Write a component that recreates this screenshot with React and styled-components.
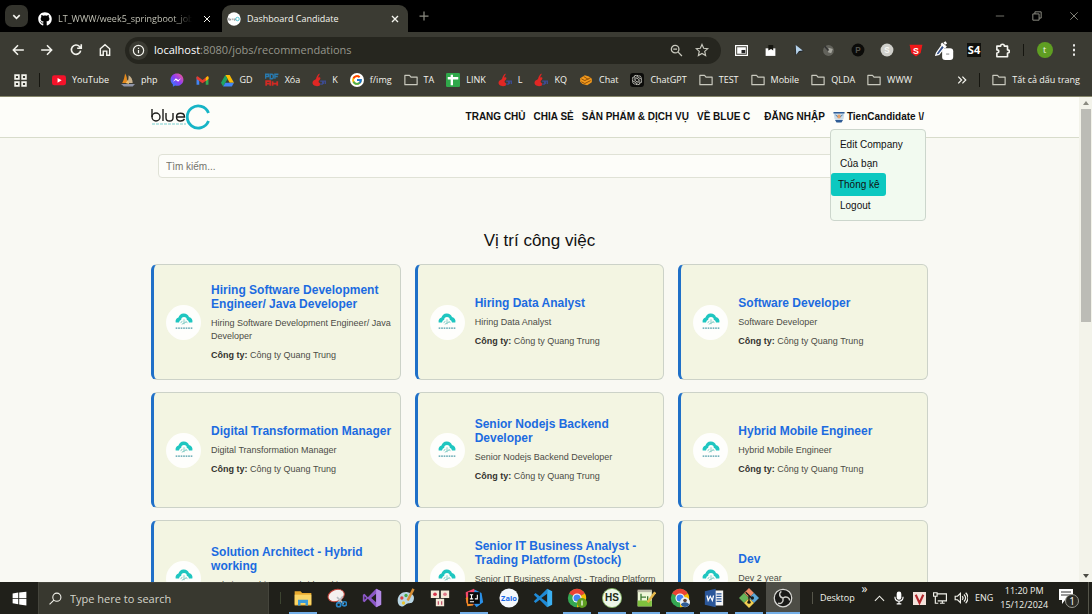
import React from "react";
import styled, { createGlobalStyle, css } from "styled-components";
import { FaGithub } from "react-icons/fa";
import { FcGoogle } from "react-icons/fc";
import { SiOpenai } from "react-icons/si";

const Global = createGlobalStyle`
  * { box-sizing: border-box; }
  html, body { margin: 0; background: #f9f9f3; }
  button, input { font: inherit; color: inherit; }
  button { border: 0; padding: 0; background: none; cursor: pointer; }
  a { color: inherit; text-decoration: none; }
  h1, h2, p, ul { margin: 0; padding: 0; }
  ul { list-style: none; }
  svg { display: block; flex: none; }
`;

const uiFont = `"Open Sans", "Noto Sans", sans-serif`;
const pageFont = `"Liberation Sans", Arial, sans-serif`;

const Screen = styled.div`
  display: flex;
  flex-direction: column;
  height: 100vh;
  overflow: hidden;
`;

/* ---------- browser chrome ---------- */

const Chrome = styled.header`
  flex: none;
  background: #3b3b33;
  color: #f4f4ee;
  font: 500 9px/14px ${uiFont};
  border-bottom: 1px solid #86866a;
`;

const TabStrip = styled.div`
  display: flex;
  align-items: flex-end;
  height: 32px;
  background: #000;
`;

const IconButton = styled.button`
  display: flex;
  flex: none;
  align-items: center;
  justify-content: center;
  width: ${(p) => p.$w || 29}px;
  height: ${(p) => p.$h || 28}px;
  color: ${(p) => p.$color || "#f4f4ee"};
`;

const TabSearch = styled(IconButton)`
  margin: 0 5px;
  align-self: center;
  border-radius: 7px;
  background: #34342d;
`;

const Tab = styled.div`
  display: flex;
  align-items: center;
  gap: 6px;
  width: ${(p) => p.$w}px;
  height: 27px;
  padding: 0 6px 0 5px;
  border-radius: 9px 9px 0 0;
  color: ${(p) => (p.$active ? "#f4f4ee" : "#c0c0b4")};
  background: ${(p) => (p.$active ? "#3b3b33" : "none")};
`;

const TabTitle = styled.span`
  flex: 1;
  overflow: hidden;
  white-space: nowrap;
  ${(p) =>
    p.$fade &&
    css`
      mask-image: linear-gradient(90deg, #000 86%, transparent);
    `}
`;

const WindowControls = styled.div`
  display: flex;
  margin-left: auto;
`;

const Toolbar = styled.div`
  display: flex;
  align-items: center;
  height: 36px;
  padding: 0 4px 0 3px;
`;

const Omnibox = styled.label`
  display: flex;
  align-items: center;
  flex: 1;
  height: 27px;
  margin: 0 6px;
  padding: 0 6px 0 4px;
  border-radius: 14px;
  background: #26261f;
`;

const SiteInfo = styled.span`
  display: flex;
  align-items: center;
  justify-content: center;
  width: 19px;
  height: 19px;
  border-radius: 50%;
  background: #3b3b33;
`;

const Url = styled.span`
  flex: 1;
  margin-left: 6px;
  font-size: 11px;
  font-weight: 400;
  color: #96968c;
  b { font-weight: 500; color: #fff; }
`;

const Divider = styled.span`
  flex: none;
  width: 1px;
  height: ${(p) => p.$h || 12}px;
  margin: 0 ${(p) => p.$m || 0}px;
  align-self: center;
  background: ${(p) => p.$color || "#15150f"};
`;

const Bookmarks = styled.nav`
  display: flex;
  align-items: center;
  gap: 12px;
  height: 28px;
  padding: 0 12px 4px 14px;
  white-space: nowrap;
`;

const BookmarkList = styled.div`
  display: flex;
  gap: 12px;
  margin-right: auto;
`;

const Bookmark = styled.a`
  display: flex;
  align-items: center;
  gap: 6px;
`;

const Profile = styled.span`
  display: flex;
  align-items: center;
  justify-content: center;
  width: 16px;
  height: 16px;
  border-radius: 50%;
  background: #5f9e22;
`;

/* ---------- web page ---------- */

const Viewport = styled.div`
  display: flex;
  flex: 1;
  min-height: 0;
  font: 10px/14px ${pageFont};
  color: #111;
`;

const Page = styled.div`
  flex: 1;
  overflow: hidden;
  background: #f9f9f3;
`;

const SiteHeader = styled.header`
  display: flex;
  align-items: center;
  justify-content: space-between;
  height: 41px;
  padding: 0 14%;
  background: #fdfdf9;
  border-bottom: 1px solid #d8dccb;
`;

const Menu = styled.nav`
  display: flex;
  align-items: center;
  gap: 8px;
  margin-right: 4px;
  font-weight: 700;
  white-space: nowrap;
`;

const Account = styled.div`
  position: relative;
  margin-left: ${(p) => (p.$far ? 6 : 0)}px;
`;

const AccountButton = styled.button`
  display: flex;
  align-items: center;
  gap: 2px;
  font-weight: 700;
`;

const Dropdown = styled.ul`
  position: absolute;
  z-index: 2;
  top: 19px;
  right: -2px;
  width: 96px;
  padding: 5px 0 5px 1px;
  border: 1px solid #ccd6cc;
  border-radius: 4px;
  background: #f2faf0;
  font-weight: 400;
`;

const DropdownLink = styled.a`
  display: block;
  padding: 2px 8px;
  line-height: 15px;
  ${(p) =>
    p.$active &&
    css`
      width: 55px;
      margin-left: -1px;
      padding: 4px 7px;
      border-radius: 3px;
      background: #0cc8c0;
    `}
`;

const Main = styled.main`
  padding: 16px 14%;
`;

const Search = styled.input`
  display: block;
  width: calc(100% - 14px);
  height: 24px;
  margin: 0 7px;
  padding: 0 7px;
  border: 1px solid #e0e2d6;
  border-radius: 4px;
  background: #fdfdf9;
  &::placeholder { color: #73736c; opacity: 1; }
`;

const Heading = styled.h1`
  margin: 51px 0 11px;
  font-size: 17px;
  line-height: 24px;
  font-weight: 400;
  text-align: center;
`;

const Grid = styled.div`
  display: grid;
  grid-template-columns: repeat(3, 1fr);
  gap: 12px 14px;
`;

const Card = styled.article`
  display: flex;
  align-items: center;
  gap: 10px;
  height: 116px;
  padding: 0 6px 0 12px;
  border: 1px solid #ccd2c8;
  border-left: 3px solid #1f70c8;
  border-radius: 6px;
  background: #f3f5e2;
`;

const Avatar = styled.span`
  display: flex;
  flex: none;
  align-items: center;
  justify-content: center;
  width: 35px;
  height: 35px;
  border-radius: 50%;
  background: #fefefc;
`;

const CardText = styled.div`
  display: flex;
  flex-direction: column;
  gap: 6px;
  font-size: 9px;
  line-height: 13px;
  color: #4c4c46;
  b { color: #33332f; }
`;

const JobTitle = styled.h2`
  font-size: 12px;
  line-height: 14px;
  color: #1c6be0;
`;

const Scrollbar = styled.div`
  display: flex;
  flex-direction: column;
  align-items: center;
  width: 13px;
  background: #f3f3ea;
`;

const Arrow = styled.span`
  margin: 4px 0;
  border: 3px solid transparent;
  ${(p) => (p.$down ? "border-top: 4px solid #4b4b44; border-bottom: 0;" : "border-bottom: 4px solid #8a8a80; border-top: 0;")}
`;

const Thumb = styled.div`
  width: 10px;
  height: 44%;
  margin-bottom: auto;
  background: #bcbcb6;
`;

/* ---------- taskbar ---------- */

const Taskbar = styled.footer`
  display: flex;
  flex: none;
  align-items: stretch;
  height: 32px;
  background: #20201a;
  color: #f1f1ea;
  font: 500 9px/14px ${uiFont};
`;

const TaskSearch = styled.label`
  display: flex;
  align-items: center;
  gap: 8px;
  width: 231px;
  padding: 0 10px;
  background: #38382f;
  border: 1px solid #45453c;
  border-bottom: 0;
`;

const TaskInput = styled.input`
  width: 100%;
  padding: 0;
  border: 0;
  background: none;
  font-size: 11px;
  &::placeholder { color: #d4d4ca; opacity: 1; }
`;

const Apps = styled.div`
  display: flex;
  flex: 1;
  margin-left: 6px;
`;

const AppButton = styled.button`
  display: flex;
  flex: 1;
  align-items: center;
  justify-content: center;
  background: ${(p) => (p.$active ? "#4d4d46" : "none")};
  ${(p) =>
    p.$open &&
    css`
      background-image: linear-gradient(#74aee6, #74aee6);
      background-position: center bottom;
      background-size: ${p.$active ? "100%" : "28px"} 2px;
      background-repeat: no-repeat;
    `}
`;

const Tray = styled.div`
  display: flex;
  align-items: center;
  justify-content: space-between;
  width: 292px;
  padding: 0 3px 0 12px;
`;

const Clock = styled.time`
  line-height: 14px;
  text-align: center;
`;

const Raised = styled.span`
  align-self: flex-start;
  font-size: 12px;
`;

/* ---------- icons ---------- */

const Line = ({ s = 14, w = 2, children, ...rest }) => (
  <svg width={s} height={s} viewBox="0 0 24 24" fill="none" stroke="currentColor" strokeWidth={w} aria-hidden="true" {...rest}>
    {children}
  </svg>
);
const Art = ({ s = 14, box = 24, children }) => (
  <svg width={s} height={s} viewBox={`0 0 ${box} ${box}`} aria-hidden="true">{children}</svg>
);

const CloseIcon = ({ s = 10, w = 3 }) => <Line s={s} w={w}><path d="M3 3l18 18M21 3L3 21" /></Line>;
const FolderIcon = () => (
  <Line s={14} w={2} stroke="#c9c9be"><path d="M1.500 4h8l2.500 3h10.500v13h-21z" strokeLinejoin="round" /></Line>
);
const Youtube = () => (
  <Art><rect y="4" width="24" height="17" rx="4" fill="#f4122a" /><path d="M9.500 8.500v8l7-4z" fill="#fff" /></Art>
);
const PhpMyAdmin = () => (
  <Art>
    <path d="M2 17C5 12 6 7 7 1c3 4 4 10 3 16z" fill="#e58a1d" />
    <path d="M11 17c2-5 2-9 2-13 5 3 7 8 7 13z" fill="#c9b18c" />
    <path d="M0 19h24l-4 4H5z" fill="#8e94a8" /><path d="M8 17l4-6 2 8z" fill="#f0c070" />
  </Art>
);
const Messenger = () => (
  <Art>
    <defs><linearGradient id="msg" x1="0" y1="1" x2="1" y2="0"><stop stopColor="#1a8cff" /><stop offset=".5" stopColor="#8a3cf6" /><stop offset="1" stopColor="#ff5c8a" /></linearGradient></defs>
    <path d="M12 1c6.400 0 11 4.600 11 10.500S18.400 22 12 22c-1.200 0-2.300-.2-3.300-.5L5 23.500v-4C2.500 17.500 1 14.800 1 11.500 1 5.600 5.600 1 12 1z" fill="url(#msg)" />
    <path d="M5 15l5-6 4 3 5-3-5 6-4-3z" fill="#fff" />
  </Art>
);
const Gmail = () => (
  <Art s={13}>
    <path d="M1 5v15h5V10z" fill="#4285f4" /><path d="M23 5v15h-5V10z" fill="#34a853" />
    <path d="M1 5l2-1 9 7 9-7 2 1v4l-11 8L1 9z" fill="#e53a2f" /><path d="M18 7l3-3 2 1v4l-5 4z" fill="#fbbc04" />
  </Art>
);
const Drive = () => (
  <Art s={13}>
    <path d="M8 2h8l8 14h-8z" fill="#fbbc04" /><path d="M8 2l4 7-8 14-4-7z" fill="#1fa463" /><path d="M8 16h16l-4 7H4z" fill="#4285f4" />
  </Art>
);
const PdfTile = () => (
  <Art>
    <path d="M1 10V2h5v4H1M9 2v8h3c3 0 3-8 0-8zM17 10V2h6M17 6h5" fill="none" stroke="#2879ad" strokeWidth="2.500" />
    <path d="M2 22v-8h7v8M2 18h7M13 14v8M13 18h8M21 14v8" fill="none" stroke="#cf2a24" strokeWidth="3" />
  </Art>
);
const Flame = () => (
  <Art>
    <path d="M13 1c1 3-3 4-2 7 3-2 5 1 2 4-2 2-3 4 1 6l-1 4C6 24 0 21 1 16c1-4 4-3 6-6 1-3 2-7 6-9z" fill="#e02724" />
    <path d="M14 14h4v5h-4M20 19v-5h3v5" fill="none" stroke="#3d4b8f" strokeWidth="2" />
  </Art>
);
const Sheets = () => (
  <Art><rect width="24" height="24" rx="2" fill="#2fa84a" /><path d="M10 3v18M3 9h18" stroke="#fff" strokeWidth="4" /></Art>
);
const ChatIcon = () => (
  <Art><path d="M2 9l8-5 7 2 5 4v6l-8 5-8-2-4-4z" fill="#f2991c" /><path d="M4 10l6 3 10-5M4 15l6 3 10-5M8 6l8 5" stroke="#8a4a05" strokeWidth="1.600" fill="none" /></Art>
);
const GoogleBadge = () => (
  <svg width="14" height="14" viewBox="0 0 24 24"><circle cx="12" cy="12" r="12" fill="#fff" /><g transform="translate(2 2)"><FcGoogle size={20} /></g></svg>
);
const GptBadge = () => (
  <svg width="14" height="14" viewBox="0 0 24 24"><rect width="24" height="24" rx="5" fill="#0c0c0a" /><g transform="translate(3 3)" color="#d8d8d0"><SiOpenai size={18} /></g></svg>
);
const BlueCFavicon = () => (
  <Art><circle cx="12" cy="12" r="11.500" fill="#fff" /><path d="M3 10v4h3v-2H3M9 14v-3M12 11v3h2v-3" stroke="#777" strokeWidth="1.200" fill="none" /><circle cx="18" cy="12" r="3" stroke="#18b2c4" strokeWidth="1.200" fill="none" /></Art>
);

const PipIcon = () => <Art s={13}><path d="M1 3h22v18H1z" fill="none" stroke="#fff" strokeWidth="2.500" /><path d="M4 6h16v12H4z" fill="#fff" /><path d="M12 11h7v6h-7z" fill="#222" /></Art>;
const ClipIcon = () => <Art s={13}><path d="M3 8h18v14H3z" fill="#fff" /><path d="M8 2h9v10l-4-3-5 3z" fill="#15150f" /></Art>;
const CursorIcon = () => <Art s={13}><path d="M4 2l16 11-9 2-6 6z" fill="#20262e" /><path d="M5 2l13 10-7 1-5 7z" fill="#b7d4ec" /></Art>;
const DimDisc = () => <Art s={13}><circle cx="12" cy="12" r="10" fill="#62625b" /><path d="M12 7l8 2-3 8-6-2z" fill="#a6a69e" /><path d="M12 12L5 4" stroke="#333" strokeWidth="3" /></Art>;
const LetterDisc = ({ bg, fg, t }) => <Art s={14}><circle cx="12" cy="12" r="11" fill={bg} /><text x="12" y="17" textAnchor="middle" fontSize="14" fontWeight="700" fontFamily="Liberation Sans" fill={fg}>{t}</text></Art>;
const RedShield = () => <Art s={14}><path d="M1 3h22l-3 14-8 6-8-6z" fill="#f01818" /><text x="12" y="18" textAnchor="middle" fontSize="15" fontWeight="700" fontFamily="Liberation Sans" fill="#fff">S</text></Art>;
const PipetteIcon = () => <Art s={19}><path d="M2 15L9 5l3 3-7 9-4 1z" fill="#33508a" stroke="#fff" strokeWidth="1.600" /><path d="M8 3l6 5M12 1l2 3" stroke="#fff" strokeWidth="3" /><rect x="9" y="9" width="14" height="15" rx="4" fill="#fff" /><path d="M14 16.500h4" stroke="#999" strokeWidth="1.500" /></Art>;
const S4Icon = () => <Art s={14}><rect width="24" height="24" fill="#10100c" /><text x="12" y="19" textAnchor="middle" fontSize="19" fontWeight="700" fontFamily="Open Sans" fill="#fff">S4</text></Art>;
const PuzzleIcon = () => <Line s={15} w={2.6}><path d="M3 5h6c0-4 6-4 6 0h5v6c4 0 4 5 0 5v6H3v-6c4 0 4-5 0-5z" strokeLinejoin="round" /></Line>;

const BlueCLogo = () => (
  <svg width="60" height="26" viewBox="0 0 60 26" role="img" aria-label="blueC">
    <g fill="none" stroke="#1d1d1b" strokeWidth="1.400">
      <path d="M1 5v8" /><circle cx="5" cy="13" r="4" /><path d="M12 5v12M15 9v5c0 4 7 4 7 0V9" />
      <path d="M25.500 13h8c0-5-8-5-8 0s6 5 8 2" />
    </g>
    <path d="M1 20h34" stroke="#7ad0cf" strokeWidth="1.200" strokeDasharray="3 1" />
    <path d="M57.500 9A11 11 0 1 0 57.500 17" fill="none" stroke="#16b4c6" strokeWidth="2.800" />
  </svg>
);
const UserBadge = () => (
  <Art s={12}><path d="M1 2h22l-2 14-9 7-9-7z" fill="#cbdcea" /><path d="M1 2h22v3H1zM4 18h16l-3 5H7z" fill="#2f5c96" /><circle cx="12" cy="11" r="4" fill="#e7a26a" /><path d="M5 8l4 3M19 8l-4 3" stroke="#3c74a8" strokeWidth="2" /></Art>
);
const CompanyLogo = () => (
  <svg width="20" height="20" viewBox="0 0 36 36" aria-hidden="true">
    <path d="M3 19a8 8 0 0 1 5-9 10 10 0 0 1 19-1 8 8 0 0 1 6 10h-6a6 6 0 0 0-4-5 5 5 0 0 0-10 0 6 6 0 0 0-4 5z" fill="#1fc6c0" />
    <path d="M12 20l3-4M18 22v-9M24 20l-3-4M14 22l8-4" stroke="#7cc9c2" strokeWidth="1.600" />
    <path d="M3 29h30" stroke="#4a9aa6" strokeWidth="2" strokeDasharray="3 1.500" />
  </svg>
);

const ChromeArt = () => (
  <>
    <circle cx="12" cy="12" r="11" fill="#34a853" />
    <path d="M12 12L2.500 6.500a11 11 0 0 1 19 0z" fill="#ea4335" />
    <path d="M12 12l9.500-5.500A11 11 0 0 1 12 23z" fill="#fbbc05" />
    <circle cx="12" cy="12" r="5.500" fill="#fff" /><circle cx="12" cy="12" r="4.200" fill="#4285f4" />
  </>
);

const appList = [
  { name: "File Explorer", open: true, art: <><path d="M2 4h7l2 2h11v15H2z" fill="#e8a92e" /><path d="M2 8h20v12H2z" fill="#fbd667" /><path d="M6 21v-7h12v7h-3v-3H9v3z" fill="#3c9bd8" /></> },
  { name: "Snipping Tool", art: <><ellipse cx="11" cy="9" rx="10" ry="7" fill="#f4f0ee" stroke="#c4443a" strokeWidth="1.200" transform="rotate(-20 11 9)" /><path d="M12 11l8 8M19 10l-6 8" stroke="#b9bdc2" strokeWidth="2" /><circle cx="14" cy="20" r="2.500" fill="none" stroke="#2a86c7" strokeWidth="2" /><circle cx="21" cy="19" r="2.500" fill="none" stroke="#2a86c7" strokeWidth="2" /></> },
  { name: "Visual Studio", art: <><path d="M17 1l6 3v16l-6 3L7 13l-4 4-2-1V8l2-1 4 4z" fill="#8b57c6" /><path d="M17 7v10l-6-5zM3 10v4l2-2z" fill="#20201a" /><path d="M17 1l6 3v16l-6 3z" fill="#b48be6" /></> },
  { name: "Paint", art: <><path d="M2 15C2 8 8 4 14 5s9 5 7 10-5 2-8 4-4 4-7 3-4-4-4-7z" fill="#b9d6e4" /><circle cx="7" cy="12" r="2" fill="#d94141" /><circle cx="12" cy="9" r="2" fill="#49a84a" /><circle cx="9" cy="18" r="2" fill="#e8c22e" /><path d="M21 1l-7 14" stroke="#d78e35" strokeWidth="3" /></> },
  { name: "Mahjong", art: <><path d="M1 3h10v9H1zM13 3h10v9H13zM7 13h10v9H7z" fill="#f5ead9" /><circle cx="6" cy="7.500" r="2.200" fill="#d8344a" /><circle cx="18" cy="7.500" r="2.200" fill="#e27a8a" /><path d="M10 16v4M14 16v4" stroke="#c0506a" strokeWidth="1.500" /></> },
  { name: "IntelliJ IDEA", open: true, art: <><path d="M2 5l10-4 4 7-4 12-9-2z" fill="#f4476b" /><path d="M2 12l6-3 3 12-7 1z" fill="#f08a24" /><path d="M13 2l8 4 2 11-8 6-6-8z" fill="#2a90e8" /><path d="M5 5h14v14H5z" fill="#0a0a0a" /><path d="M7 8h4M9 8v5M7 13h4M16 8v5h-3M7 16.500h5" stroke="#fff" strokeWidth="1.300" fill="none" /></> },
  { name: "Zalo", art: <><circle cx="12" cy="12" r="11.500" fill="#f4f8fd" /><text x="12" y="15.500" textAnchor="middle" fontSize="9" fontWeight="700" fontFamily="Open Sans" fill="#1769e8">Zalo</text></> },
  { name: "Visual Studio Code", art: <><path d="M17 1L8 10 3 6 1 8l4 4-4 4 2 2 5-4 9 9z" fill="#1f8ad6" /><path d="M17 7v10l-7-5z" fill="#20201a" /><path d="M17 1l6 3v16l-6 3z" fill="#3bb0f2" /></> },
  { name: "Google Chrome", open: true, art: <><ChromeArt /><circle cx="18" cy="18" r="6" fill="#5f9e22" /><path d="M18 15v6" stroke="#fff" strokeWidth="1.500" /></> },
  { name: "HeidiSQL", open: true, art: <><circle cx="12" cy="12" r="11.500" fill="#eef6e8" stroke="#7fb45e" /><text x="12" y="16" textAnchor="middle" fontSize="12" fontWeight="700" fontFamily="Liberation Sans" fill="#1c2a18">HS</text></> },
  { name: "Notepad++", open: true, art: <><path d="M2 3h17v19H2z" fill="#eef7d8" /><path d="M2 15h17v7H2z" fill="#7fc23e" /><path d="M2 2h17v3H2z" fill="#b9b9a8" /><path d="M6 7v8M6 11h6M14 10v5" stroke="#3d7a32" strokeWidth="1.600" /><path d="M23 5l-9 12" stroke="#e5b84c" strokeWidth="3" /></> },
  { name: "Google Chrome profile", open: true, art: <><ChromeArt /><circle cx="18" cy="17" r="6" fill="#e7eef5" /><path d="M13 20c1-4 9-4 10 0a6 6 0 0 1-10 0z" fill="#2f5c96" /><circle cx="18" cy="15" r="2.200" fill="#5d4030" /></> },
  { name: "Word", open: true, art: <><path d="M11 3h12v18H11z" fill="#f5f5f5" /><path d="M15 7h6M15 10h6M15 13h6M15 16h6" stroke="#2b579a" strokeWidth="1.500" /><path d="M1 4l13-3v22L1 20z" fill="#2b579a" /><path d="M3.500 9l1.500 6 2.500-5 2.500 5 1.500-6" stroke="#fff" strokeWidth="1.500" fill="none" /></> },
  { name: "Git", open: true, art: <><path d="M12 0l6 6-6 6-6-6z" fill="#f08a66" /><path d="M6 6l6 6-6 6-6-6z" fill="#67b35a" /><path d="M18 6l6 6-6 6-6-6z" fill="#5ca7d8" /><path d="M12 12l6 6-6 6-6-6z" fill="#f1cf52" /><path d="M8 5l8 8M12 9v9" stroke="#1a1a16" strokeWidth="1.600" /><circle cx="12" cy="17" r="2" fill="#1a1a16" /><circle cx="16" cy="12" r="2" fill="#1a1a16" /></> },
  { name: "OBS Studio", open: true, active: true, art: <><circle cx="12" cy="12" r="10.500" fill="#1a1a18" stroke="#d8d8d4" strokeWidth="1.500" /><path d="M12 12C7 11 7 6 10 4M12 12c4-3 8 0 8 3M12 12c1 5-3 8-6 6" stroke="#cfcfca" strokeWidth="1.800" fill="none" /></> },
];

const bookmarks = [
  ["YouTube", <Youtube />], ["php", <PhpMyAdmin />], ["", <Messenger />, "Messenger"], ["", <Gmail />, "Gmail"],
  ["GD", <Drive />], ["Xóa", <PdfTile />], ["K", <Flame />], ["f/img", <GoogleBadge />], ["TA", <FolderIcon />],
  ["LINK", <Sheets />], ["L", <Flame />], ["KQ", <Flame />], ["Chat", <ChatIcon />], ["ChatGPT", <GptBadge />],
  ["TEST", <FolderIcon />], ["Mobile", <FolderIcon />], ["QLDA", <FolderIcon />], ["WWW", <FolderIcon />],
];

const extensions = [
  ["Picture in picture", <PipIcon />], ["Clipper", <ClipIcon />], ["Pointer", <CursorIcon />], ["Tracker", <DimDisc />],
  ["P", <LetterDisc bg="#0b0b09" fg="#55554e" t="P" />], ["S", <LetterDisc bg="#cfcfca" fg="#f6f6f2" t="S" />],
  ["Shield", <RedShield />], ["Color picker", <PipetteIcon />], ["S4", <S4Icon />], ["Extensions", <PuzzleIcon />],
];

const company = "Công ty Quang Trung";
const jobs = [
  ["Hiring Software Development Engineer/ Java Developer"],
  ["Hiring Data Analyst"],
  ["Software Developer"],
  ["Digital Transformation Manager"],
  ["Senior Nodejs Backend Developer"],
  ["Hybrid Mobile Engineer"],
  ["Solution Architect - Hybrid working"],
  ["Senior IT Business Analyst - Trading Platform (Dstock)"],
  ["Dev", "Dev 2 year"],
];

function BrowserChrome() {
  return (
    <Chrome>
      <TabStrip>
        <TabSearch $w={23} $h={22} aria-label="Search tabs"><Line s={11} w={3.5}><path d="M5 9l7 7 7-7" /></Line></TabSearch>
        <Tab $w={189}>
          <FaGithub size={14} color="#fff" />
          <TabTitle $fade>LT_WWW/week5_springboot_jobs</TabTitle>
          <IconButton $w={18} $h={18} aria-label="Close tab"><CloseIcon s={8} /></IconButton>
        </Tab>
        <Tab $w={186} $active>
          <BlueCFavicon />
          <TabTitle>Dashboard Candidate</TabTitle>
          <IconButton $w={14} $h={18} aria-label="Close tab"><CloseIcon s={8} w={4} /></IconButton>
        </Tab>
        <IconButton $w={32} $h={32} $color="#8a8a80" aria-label="New tab"><Line s={12} w={2.5}><path d="M12 3v18M3 12h18" /></Line></IconButton>
        <WindowControls>
          <IconButton $w={37} $h={32} $color="#8a8a80" aria-label="Minimize"><Line s={10} w={2}><path d="M2 12h20" /></Line></IconButton>
          <IconButton $w={37} $h={32} $color="#8a8a80" aria-label="Restore"><Line s={10} w={2.4}><path d="M2 7h15v15H2zM7 7V2h15v15h-5" /></Line></IconButton>
          <IconButton $w={37} $h={32} $color="#8a8a80" aria-label="Close"><CloseIcon s={10} w={2.2} /></IconButton>
        </WindowControls>
      </TabStrip>
      <Toolbar>
        <IconButton aria-label="Back"><Line w={2.6}><path d="M22 12H4M12 4l-8 8 8 8" /></Line></IconButton>
        <IconButton aria-label="Forward"><Line w={2.6}><path d="M2 12h18M12 4l8 8-8 8" /></Line></IconButton>
        <IconButton aria-label="Reload"><Line w={2.8}><path d="M20 13a8 8 0 1 1-2-7l3 3M21 2v7h-7" /></Line></IconButton>
        <IconButton aria-label="Home"><Line w={2.4}><path d="M4 10l8-7 8 7v11h-5v-7H9v7H4z" /></Line></IconButton>
        <Omnibox>
          <SiteInfo><Line s={13} w={2.2}><circle cx="12" cy="12" r="9.500" /><path d="M12 11v6M12 7v2" /></Line></SiteInfo>
          <Url><b>localhost</b>:8080/jobs/recommendations</Url>
          <IconButton $w={25} $color="#c9c9be" aria-label="Zoom"><Line s={13} w={2.4}><circle cx="9.500" cy="9.500" r="7" /><path d="M15 15l7 7M6 9.500h7" /></Line></IconButton>
          <IconButton $w={26} $color="#c9c9be" aria-label="Bookmark this page"><Line s={14} w={2}><path d="M12 2.500l2.900 6.500 7 .7-5.200 4.700 1.500 7L12 17.800l-6.200 3.600 1.500-7L2.100 9.700l7-.7z" /></Line></IconButton>
        </Omnibox>
        {extensions.map(([name, icon]) => <IconButton key={name} aria-label={name}>{icon}</IconButton>)}
        <Divider $m={6} />
        <IconButton aria-label="Profile"><Profile>t</Profile></IconButton>
        <IconButton aria-label="Menu"><Art s={14}><path d="M10.500 2h3v4h-3zM10.500 10h3v4h-3zM10.500 18h3v4h-3z" fill="#fff" /></Art></IconButton>
      </Toolbar>
      <Bookmarks>
        <Line s={13} w={3}><path d="M2 2h7v7H2zM15 2h7v7h-7zM2 15h7v7H2zM15 15h7v7h-7z" /></Line>
        <Divider $h={14} />
        <BookmarkList>
          {bookmarks.map(([text, icon, label], i) => (
            <Bookmark key={i} href="#" aria-label={label}>{icon}{text}</Bookmark>
          ))}
        </BookmarkList>
        <Bookmark as="button" aria-label="More bookmarks"><Line s={10} w={3}><path d="M3 4l8 8-8 8M13 4l8 8-8 8" /></Line></Bookmark>
        <Divider $h={14} />
        <Bookmark href="#"><FolderIcon />Tất cả dấu trang</Bookmark>
      </Bookmarks>
    </Chrome>
  );
}

function JobCard({ title, summary }) {
  return (
    <Card>
      <Avatar><CompanyLogo /></Avatar>
      <CardText>
        <JobTitle>{title}</JobTitle>
        <p>{summary}</p>
        <p><b>Công ty:</b> {company}</p>
      </CardText>
    </Card>
  );
}

function JobsPage() {
  return (
    <Viewport>
      <Page>
        <SiteHeader>
          <a href="#"><BlueCLogo /></a>
          <Menu>
            <a href="#">TRANG CHỦ</a>
            <a href="#">CHIA SẺ</a>
            <a href="#">SẢN PHẨM &amp; DỊCH VỤ</a>
            <a href="#">VỀ BLUE C</a>
            <Account $far><a href="#">ĐĂNG NHẬP</a></Account>
            <Account>
              <AccountButton><UserBadge />TienCandidate \/</AccountButton>
              <Dropdown>
                <li><DropdownLink href="#">Edit Company</DropdownLink></li>
                <li><DropdownLink href="#">Của bạn</DropdownLink></li>
                <li><DropdownLink href="#" $active>Thống kê</DropdownLink></li>
                <li><DropdownLink href="#">Logout</DropdownLink></li>
              </Dropdown>
            </Account>
          </Menu>
        </SiteHeader>
        <Main>
          <Search type="text" placeholder="Tìm kiếm..." aria-label="Tìm kiếm" />
          <Heading>Vị trí công việc</Heading>
          <Grid>
            {jobs.map(([title, summary = title]) => <JobCard key={title} title={title} summary={summary} />)}
          </Grid>
        </Main>
      </Page>
      <Scrollbar><Arrow /><Thumb /><Arrow $down /></Scrollbar>
    </Viewport>
  );
}

function WindowsTaskbar() {
  return (
    <Taskbar>
      <IconButton $w={38} $h={32} aria-label="Start"><Art s={15}><path d="M1 4l9-1.500V11H1zM11.500 2.300L23 1v10H11.500zM1 12.500h9V21l-9-1.500zM11.500 12.500H23V23l-11.500-1.500z" fill="#fff" /></Art></IconButton>
      <TaskSearch>
        <Line s={13} w={2}><circle cx="14.500" cy="9.500" r="7.500" /><path d="M9 15l-8 8" /></Line>
        <TaskInput type="text" placeholder="Type here to search" aria-label="Type here to search" />
      </TaskSearch>
      <Apps>
        <Divider $h={12} $m={5} $color="#3c4430" />
        {appList.map((a) => (
          <AppButton key={a.name} aria-label={a.name} $open={a.open} $active={a.active}><Art s={20}>{a.art}</Art></AppButton>
        ))}
      </Apps>
      <Tray>
        <Divider $h={12} $color="#55554a" />
        <span>Desktop</span>
        <Raised>»</Raised>
        <Line s={11} w={2.4}><path d="M2 17L12 7l10 10" /></Line>
        <Art s={14}><rect x="8" y="1" width="8" height="14" rx="4" fill="#fff" /><path d="M5 10c0 10 14 10 14 0M12 17v6M8 22h8" stroke="#fff" strokeWidth="2" fill="none" /></Art>
        <Art s={13}><rect width="24" height="24" fill="#f4e3dc" /><path d="M5 5l7 15 7-15" stroke="#b3262b" strokeWidth="4" fill="none" /></Art>
        <Line s={14} w={2}><path d="M8 5h15v12H8M12 21h8M16 17v4M1 3h6v6H1zM4 9v12h5" /></Line>
        <Line s={14} w={2}><path d="M2 9h4l5-5v16l-5-5H2zM14 9c2 2 2 4 0 6M17 6c4 4 4 8 0 12M20 3c6 6 5 12 0 18" /></Line>
        <span>ENG</span>
        <Clock>11:20 PM<br />15/12/2024</Clock>
        <IconButton $w={26} aria-label="Notifications">
          <svg width="22" height="22" viewBox="0 0 22 22"><path d="M2 2h14v11H8l-3 4v-4H2z" fill="#fff" /><path d="M4 5h10M4 8h10" stroke="#333" /><circle cx="15" cy="14" r="6.500" fill="#2b2b25" stroke="#9a9a92" /><text x="15" y="17.500" textAnchor="middle" fontSize="10" fontFamily="Open Sans" fill="#fff">1</text></svg>
        </IconButton>
        <Divider $h={32} $color="#55554a" />
      </Tray>
    </Taskbar>
  );
}

export default function App() {
  return (
    <Screen>
      <Global />
      <BrowserChrome />
      <JobsPage />
      <WindowsTaskbar />
    </Screen>
  );
}
